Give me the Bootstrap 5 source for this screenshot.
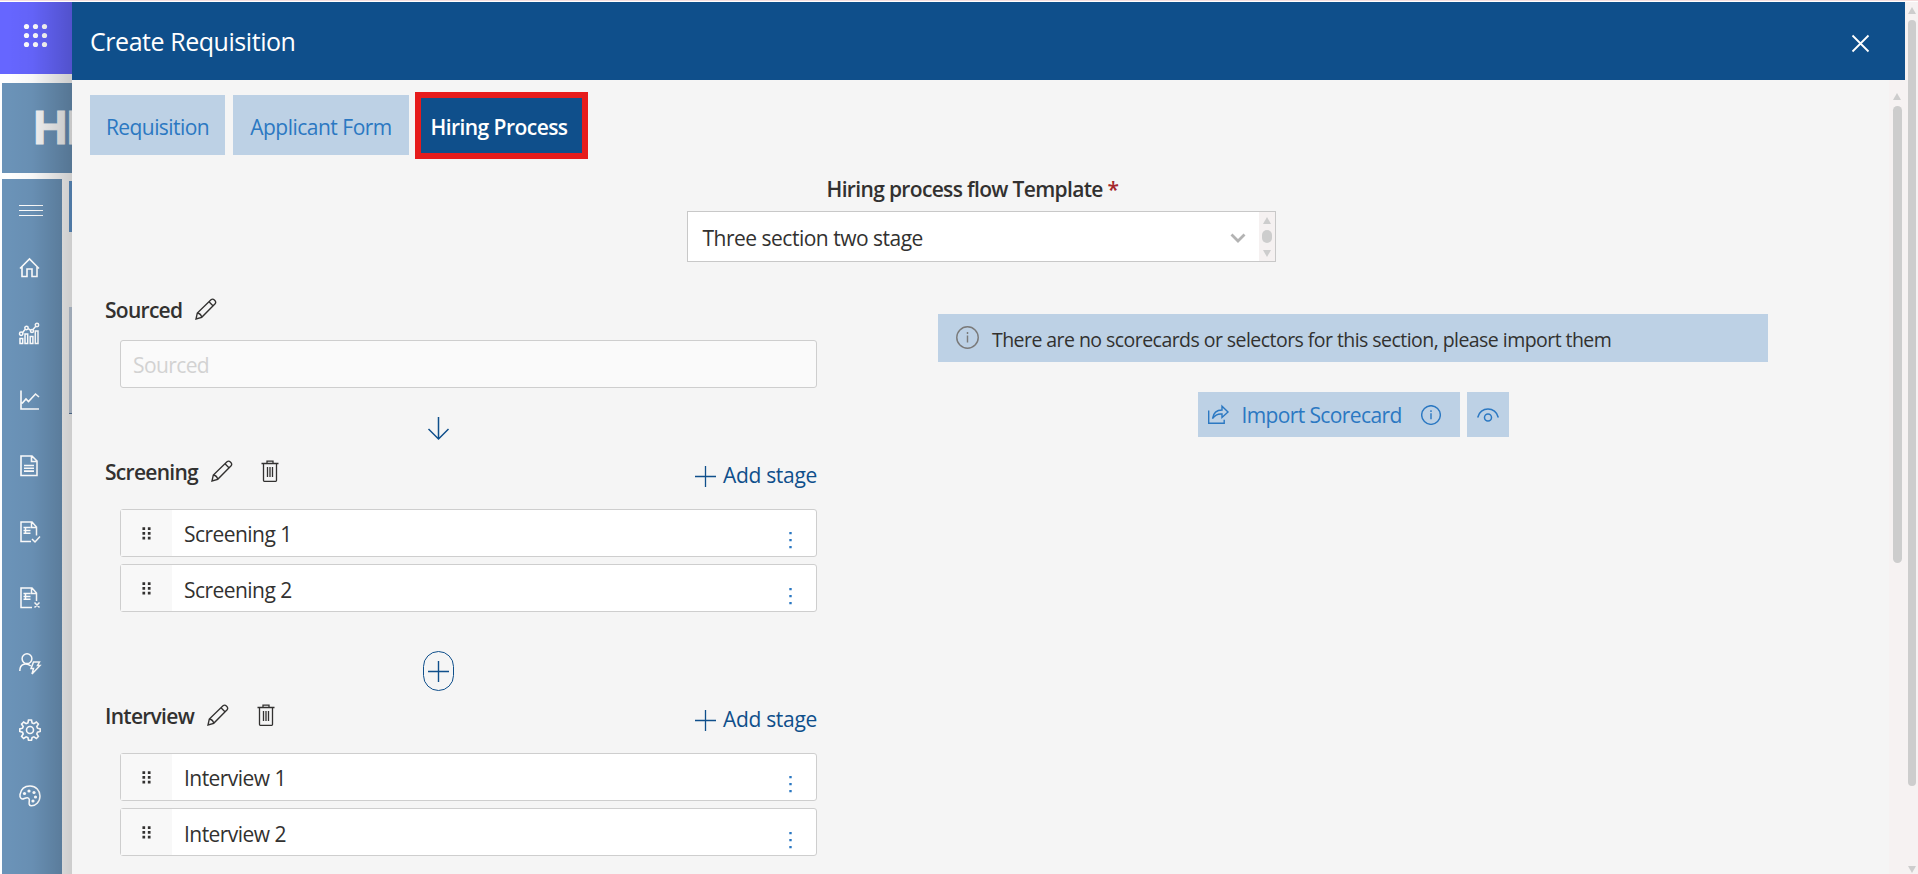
<!DOCTYPE html>
<html lang="en">
<head>
<meta charset="utf-8">
<title>Create Requisition</title>
<link href="https://cdn.jsdelivr.net/npm/bootstrap@5.3.0/dist/css/bootstrap.min.css" rel="stylesheet">
<style>
body{height:874px;overflow:hidden;background:#f5f5f5;font-family:"Open Sans","Noto Sans",sans-serif;font-size:21px;line-height:28px;color:#323130}
svg{display:block;flex:none;fill:none;stroke:currentColor;overflow:visible}
.solid{fill:currentColor;stroke:none}
button{white-space:nowrap}
.page-top{height:2px;background:linear-gradient(#f5dede 50%,#fff 50%)}
.shell{height:872px}
/* application behind the panel */
.behind{width:72px;background:#fff;position:relative;overflow:hidden}
.behind::after{content:"";position:absolute;inset:0;background:linear-gradient(90deg,transparent 10%,rgba(0,0,0,.03) 45%,rgba(0,0,0,.2))}
.launcher{height:72px;background:#6666ff;color:#fff;padding:22px 0 0 24px}
.logo-bar{height:90px;margin:9px 0 6px 2px;background:#6b93b8;color:#f7f7f7;font:bold 48px/90px "Liberation Sans",Arial,sans-serif;padding-left:31px;letter-spacing:-1.5px;white-space:nowrap;-webkit-text-stroke:.8px #f7f7f7}
.side-nav{width:60px;margin-left:2px;background:#6b93b8}
.side-nav a{height:66px;color:#fff;padding:2px 0 0 17px}
.side-nav a:first-child{height:55px;padding-top:7px}
.sliver{width:3px;padding-top:2px}
.sliver i{display:block}
.sl-a{height:51px;background:#6196cd}
.sl-b{height:106px;margin-top:75px;background:#c4d1e2}
.sl-c{height:1px;background:#56779d}
/* panel */
.modal-head{height:78px;background:#0f4f8b;color:#fff;padding:0 36px 0 18px}
.modal-head svg{margin-top:4px}
.head-title{font-size:25px;letter-spacing:-.45px;font-weight:400;margin:0}
.form-area{height:794px}
.tabs-row{padding:12px 0 0 18px;height:79px}
.tab-btn{height:60px;margin-top:3px;border:0;border-radius:0;background:#bdd1e5;color:#2b78c2;font-size:21px;padding:5px 0 0}
.tab-a{width:135px;letter-spacing:-.58px}
.tab-b{width:176px;margin:3px 6px 0 8px;letter-spacing:-.5px}
.tab-on{background:#0f4f8b;color:#fff;border:6px solid #e61c1c;height:67px;width:173px;margin-top:0;padding:4px 5px 0 0;font-weight:600;letter-spacing:-.55px}
.tpl{padding-left:1px}
.tpl-label{font-weight:600;letter-spacing:-.66px;height:28px;margin:16px 17px 8px 0}
.req{color:#a4262c}
.tpl-box{width:589px;height:51px;border:1px solid #c8c8c8;background:#fff}
.tpl-main{padding:2px 14px 0 15px;letter-spacing:-.5px}
.chev{stroke:#b3b3b3;stroke-width:2.8}
.mini-bar{width:16px;background:#f5f1f1;padding-top:5px}
.left-col{width:745px;padding-left:33px}
.sec-title{font-weight:600;letter-spacing:-.72px;padding-top:2px}
.sec-head{height:28px}
.first-head{margin:33px 0 17px}
.later-head{margin-bottom:24px}
.pen{margin-left:13px}
.bin{margin-left:28px}
.stage{height:48px;width:697px;margin-left:15px;border:1px solid #cecece;border-radius:3px;background:#fff}
.stage + .stage{margin-top:7px}
.stage-off{background:#fafafa;color:#d2d2d2;padding:2px 12px 0;letter-spacing:-.6px}
.grip{width:51px;background:#f8f8f8}
.stage-name{padding:1px 0 0 12px;letter-spacing:-.55px}
.stage + .stage .stage-name{padding-top:3px}
.kebab{color:#2b78c2;margin:14px 24px 0 0}
.stage + .stage .kebab{margin-top:16px}
.add-stage{color:#0f4f8b;letter-spacing:-.3px;background:none;border:0;padding:7px 0 0}
.add-stage svg{margin:3px 7px 0 0}
.arrow-down{margin:29px 0 17px 323px;color:#0f4f8b}
.ring{width:31px;height:40px;margin:39px 0 10px 318px;border:1.3px solid #0f4f8b;border-radius:16px;color:#0f4f8b}
.right-col{width:830px;margin-left:121px;padding-top:52px}
.note{height:48px;background:#bdd1e5;padding-left:18px;margin-bottom:30px;font-size:19.5px;letter-spacing:-.55px}
.note svg{color:#7a7a7a;margin:-2px 13px 0 0}
.note span{padding-top:3px}
.acts{gap:7px}
.act{height:45px;border:0;border-radius:0;background:#bdd1e5;color:#2b78c2;font-size:21px;padding:0;letter-spacing:-.62px}
.act-import{width:262px;padding-left:10px}
.act-import span{padding:3px 19px 0 13px}
.act-view{width:42px}
/* scroll bars */
.scroll-in{width:16px;background:#f6f2f2;padding-top:13px}
.scroll-out{width:13px;background:#f6f2f2;padding-top:5px}
.thumb{background:#cdcdcd;border-radius:6px;margin:6px auto 0}
.th-mini{width:10px;height:13px;margin-bottom:7px}
.th-in{width:9px;height:457px}
.th-out{width:8px;height:766px;margin-bottom:80px}
.arr-u,.arr-d{width:0;height:0;border:4.5px solid transparent;margin:0 auto}
.arr-u{border-top:0;border-bottom:7px solid #cdcdcd}
.arr-d{border-bottom:0;border-top:7px solid #cdcdcd}
</style>
</head>
<body>
<svg width="0" height="0" class="position-absolute">
 <symbol id="pencil" viewBox="0 0 22 22"><path stroke-width="1.350" d="M1 21l1.300-6L16 1.700q1.700-1.400 3.600.5t.5 3.600L6.700 19.300zM2.300 15q3.700.6 4.400 4.300M14 3.700l4.200 4.200"/></symbol>
 <symbol id="trash" viewBox="0 0 18 22"><path stroke-width="1.300" d="M0.500 3.500h17M2.500 3.500v17q0 .8.800.8h11.400q.8 0 .8-.8v-17M6 3V1.200h6V3M6.500 7v10M9 7v10M11.500 7v10"/></symbol>
 <symbol id="plus" viewBox="0 0 21 21"><path d="M0 10.500h21M10.500 0v21"/></symbol>
 <symbol id="grip" viewBox="0 0 10 14"><path class="solid" d="M.5 0h3v3h-3zM6.500 0h3v3h-3zM.5 5.300h3v3h-3zM6.500 5.300h3v3h-3zM.5 10.600h3v3h-3zM6.500 10.600h3v3h-3z"/></symbol>
 <symbol id="kebab" viewBox="0 0 3 17"><path class="solid" d="M.3 0h2.400v2.200H.3zM.3 7h2.400v2.200H.3zM.3 14h2.400v2.200H.3z"/></symbol>
 <symbol id="info" viewBox="0 0 24 24"><circle cx="12" cy="12" r="11.200"/><path d="M12 9.800v7.400M12 6.300v2"/></symbol>
</svg>
<div class="page-top"></div>
<div class="shell d-flex">
 <aside class="behind flex-shrink-0 d-flex flex-column">
  <div class="launcher"><svg class="solid" width="23" height="23"><circle cx="2.500" cy="2.500" r="2.600"/><circle cx="11.500" cy="2.500" r="2.600"/><circle cx="20.500" cy="2.500" r="2.600"/><circle cx="2.500" cy="11.500" r="2.600"/><circle cx="11.500" cy="11.500" r="2.600"/><circle cx="20.500" cy="11.500" r="2.600"/><circle cx="2.500" cy="20.500" r="2.600"/><circle cx="11.500" cy="20.500" r="2.600"/><circle cx="20.500" cy="20.500" r="2.600"/></svg></div>
  <div class="logo-bar overflow-hidden">HR</div>
  <div class="d-flex flex-grow-1 justify-content-between">
   <nav class="side-nav">
    <a class="d-flex align-items-center"><svg width="24" height="11"><path d="M0 .5h24M0 5.500h24M0 10.500h24"/></svg></a>
    <a class="d-flex align-items-center"><svg width="22" height="22" stroke-width="1.600"><path d="M1 11.500L10.500 2 20 11.500M3 10v9.500h5V12h5v7.500h5V10"/></svg></a>
    <a class="d-flex align-items-center"><svg width="22" height="22" stroke-width="1.500"><path d="M1 20.500v-5h2.700v5zM6 20.500V11h2.700v9.500zM11.200 20.500v-7h2.700v7zM16.300 20.500V8H19v12.500zM3.600 9.500L6 6.500M9.300 5.500l2.300 1.800M14 6.500L17 3"/><circle cx="2.200" cy="10.700" r="1.700"/><circle cx="7.500" cy="5" r="1.700"/><circle cx="13" cy="8" r="1.500"/><circle cx="18" cy="2" r="1.700"/></svg></a>
    <a class="d-flex align-items-center"><svg width="22" height="22" stroke-width="1.600"><path d="M2 1.500V20h18M3 14.500l4-4.500 2.500 2.500 7-7.500 3.500 3"/></svg></a>
    <a class="d-flex align-items-center"><svg width="22" height="22" stroke-width="1.600"><path d="M2 1h11l5 5v14.500H2zM12.500 1v5.500H18M5 10.500h10M5 13.300h10M5 16.100h10"/></svg></a>
    <a class="d-flex align-items-center"><svg width="22" height="22" stroke-width="1.500"><path d="M12 20.500H2V1h11l4.500 5v8.500M12.500 1v5.500h5M4.500 6.500h7M4.500 9.500h7M4.500 12.300h7M6.500 6v7M13 18l3 3 5-5.500"/></svg></a>
    <a class="d-flex align-items-center"><svg width="22" height="22" stroke-width="1.500"><path d="M13 20.500H2V1h11l4.500 5v8M12.500 1v5.500h5M4.500 6.500h7M4.500 9.500h7M4.500 12.300h7M6.500 6v7M15.500 15.500l5 5M20.500 15.500l-5 5"/></svg></a>
    <a class="d-flex align-items-center"><svg width="22" height="22" stroke-width="1.500"><circle cx="8" cy="5.700" r="4.900"/><path d="M.8 18c0-8 7-8.500 11-5M14.500 9h6l-2 3.500h2.500l-8 8.500 1.500-5.500H12z"/></svg></a>
    <a class="d-flex align-items-center"><svg width="22" height="22" stroke-width="1.600"><circle cx="11" cy="11" r="3.500"/><path d="M9.500 1h3l.6 2.900 1.800.8L17.400 3l2 2-1.600 2.500.7 1.700 2.700.7v2.600l-2.700.7-.7 1.800 1.600 2.500-2 2-2.500-1.700-1.800.8-.6 2.700h-3l-.6-2.700-1.800-.8L4.600 19.500l-2-2L4.200 15l-.7-1.800-2.700-.7V9.900l2.700-.7.700-1.700L2.600 5l2-2 2.500 1.700 1.800-.8z"/></svg></a>
    <a class="d-flex align-items-center"><svg width="22" height="22" stroke-width="1.500"><path d="M1 9.500C2 4 6 1 11 1c6 0 10 4.500 10 10 0 6-4.500 10-9 9.700-3-.3-1.500-4-1.700-6-.4-3-3.300-2-5-1.200C2.500 14.800.5 13 1 9.500z"/><g class="solid"><circle cx="5.500" cy="8.500" r="1.600"/><circle cx="10" cy="6" r="1.600"/><circle cx="15" cy="7.500" r="1.600"/><circle cx="16.500" cy="12" r="1.600"/><circle cx="14" cy="16" r="1.600"/></g></svg></a>
   </nav>
   <div class="sliver"><i class="sl-a"></i><i class="sl-b"></i><i class="sl-c"></i></div>
  </div>
 </aside>
 <main class="flex-grow-1">
  <header class="modal-head d-flex align-items-center justify-content-between">
   <h1 class="head-title">Create Requisition</h1>
   <svg width="17" height="17" stroke-width="1.800"><path d="M.5.5l16 16M16.500.5l-16 16"/></svg>
  </header>
  <div class="d-flex form-area">
   <section class="flex-grow-1">
    <div class="tabs-row d-flex align-items-start">
     <button class="btn tab-btn tab-a">Requisition</button><button class="btn tab-btn tab-b">Applicant Form</button><button class="btn tab-btn tab-on">Hiring Process</button>
    </div>
    <div class="tpl d-flex flex-column align-items-center">
     <div class="tpl-label">Hiring process flow Template <span class="req">*</span></div>
     <div class="tpl-box d-flex">
      <div class="tpl-main flex-grow-1 d-flex align-items-center justify-content-between">Three section two stage
       <svg class="chev" width="14" height="8"><path d="M.5.5L7 7 13.500.5"/></svg></div>
      <div class="mini-bar"><div class="arr-u"></div><div class="thumb th-mini"></div><div class="arr-d"></div></div>
     </div>
    </div>
    <div class="d-flex">
     <div class="left-col">
      <div class="sec-head first-head d-flex align-items-center"><span class="sec-title">Sourced</span><svg class="pen" width="22" height="22"><use href="#pencil"/></svg></div>
      <div class="stage stage-off d-flex align-items-center">Sourced</div>
      <svg class="arrow-down" width="21" height="23" stroke-width="1.500"><path d="M10.500 0v22M.5 12l10 10 10-10"/></svg>
      <div class="sec-head later-head d-flex align-items-center"><span class="sec-title">Screening</span><svg class="pen" width="22" height="22"><use href="#pencil"/></svg><svg class="bin" width="18" height="22"><use href="#trash"/></svg>
       <button class="add-stage d-flex align-items-center ms-auto"><svg width="21" height="21" stroke-width="1.300"><use href="#plus"/></svg>Add stage</button></div>
      <div class="stage d-flex"><div class="grip d-flex align-items-center justify-content-center"><svg width="9" height="13"><use href="#grip"/></svg></div><div class="stage-name d-flex align-items-center flex-grow-1">Screening 1</div><svg class="kebab align-self-center" width="3" height="17"><use href="#kebab"/></svg></div>
      <div class="stage d-flex"><div class="grip d-flex align-items-center justify-content-center"><svg width="9" height="13"><use href="#grip"/></svg></div><div class="stage-name d-flex align-items-center flex-grow-1">Screening 2</div><svg class="kebab align-self-center" width="3" height="17"><use href="#kebab"/></svg></div>
      <div class="ring d-flex align-items-center justify-content-center"><svg width="21" height="21" stroke-width="1.400"><use href="#plus"/></svg></div>
      <div class="sec-head later-head d-flex align-items-center"><span class="sec-title">Interview</span><svg class="pen" width="22" height="22"><use href="#pencil"/></svg><svg class="bin" width="18" height="22"><use href="#trash"/></svg>
       <button class="add-stage d-flex align-items-center ms-auto"><svg width="21" height="21" stroke-width="1.300"><use href="#plus"/></svg>Add stage</button></div>
      <div class="stage d-flex"><div class="grip d-flex align-items-center justify-content-center"><svg width="9" height="13"><use href="#grip"/></svg></div><div class="stage-name d-flex align-items-center flex-grow-1">Interview 1</div><svg class="kebab align-self-center" width="3" height="17"><use href="#kebab"/></svg></div>
      <div class="stage d-flex"><div class="grip d-flex align-items-center justify-content-center"><svg width="9" height="13"><use href="#grip"/></svg></div><div class="stage-name d-flex align-items-center flex-grow-1">Interview 2</div><svg class="kebab align-self-center" width="3" height="17"><use href="#kebab"/></svg></div>
     </div>
     <div class="right-col">
      <div class="note d-flex align-items-center"><svg width="23" height="23" stroke-width="1.500"><use href="#info"/></svg><span>There are no scorecards or selectors for this section, please import them</span></div>
      <div class="acts d-flex justify-content-center">
       <button class="btn act act-import d-flex align-items-center"><svg width="21" height="19" stroke-width="1.400"><path d="M.7 5.500v12.700h15.500v-3.500M4.500 13.500C5.500 7 9 5 14 5V1.200L20 7l-6 5.500V9C9.500 8.500 7 10 4.500 13.500z"/></svg><span>Import Scorecard</span><svg width="20" height="20" stroke-width="1.700"><use href="#info"/></svg></button>
       <button class="btn act act-view d-flex align-items-center justify-content-center"><svg width="22" height="14" stroke-width="1.500"><path d="M.7 9.500C3-1.800 19-1.800 21.300 9.500"/><circle cx="11" cy="9.500" r="3.500"/></svg></button>
      </div>
     </div>
    </div>
   </section>
   <div class="scroll-in flex-shrink-0"><div class="arr-u"></div><div class="thumb th-in"></div></div>
  </div>
 </main>
 <div class="scroll-out flex-shrink-0"><div class="arr-u"></div><div class="thumb th-out"></div><div class="arr-d"></div></div>
</div>
<script src="https://cdn.jsdelivr.net/npm/bootstrap@5.3.0/dist/js/bootstrap.bundle.min.js"></script>
</body>
</html>
